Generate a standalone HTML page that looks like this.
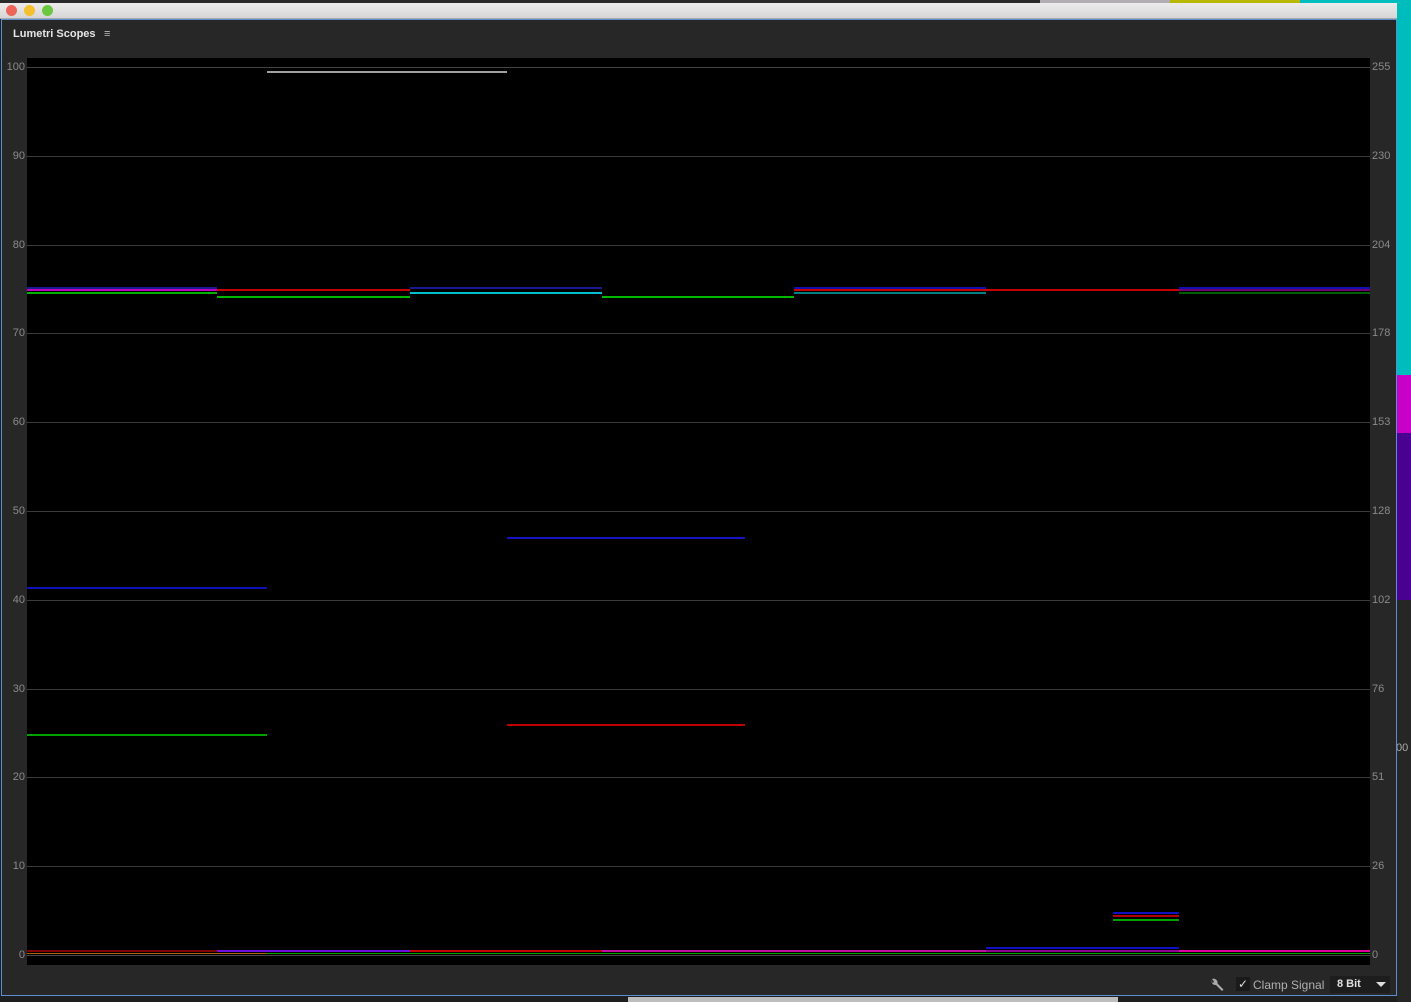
<!DOCTYPE html>
<html><head><meta charset="utf-8">
<style>
*{margin:0;padding:0;box-sizing:border-box}
body{width:1411px;height:1002px;overflow:hidden;background:#1e1e1e;position:relative;font-family:"Liberation Sans",sans-serif}
.a{position:absolute}
.l{position:absolute;height:2px}
.g{position:absolute;left:27px;width:1343px;height:1px;background:#3a3a3a}
.yl{position:absolute;left:0;width:25px;text-align:right;color:#8a8a8a;font-size:11px}
.yr{position:absolute;left:1372px;color:#8a8a8a;font-size:11px}
</style></head><body>
<div class="a" style="left:1397px;top:0;width:14px;height:375px;background:#00bdbd"></div>
<div class="a" style="left:1397px;top:375px;width:14px;height:58px;background:#c800c8"></div>
<div class="a" style="left:1397px;top:433px;width:14px;height:167px;background:#4a0090"></div>
<div class="a" style="left:1397px;top:600px;width:14px;height:402px;background:#262626"></div>
<div class="a" style="left:1396px;top:742px;color:#aaa;font-size:11px">00</div>
<div class="a" style="left:0;top:0;width:1397px;height:3px;background:#2a2a2a"></div>
<div class="a" style="left:1040px;top:0;width:130px;height:3px;background:#b0aeb0"></div>
<div class="a" style="left:1170px;top:0;width:130px;height:3px;background:#b8b800"></div>
<div class="a" style="left:1300px;top:0;width:97px;height:3px;background:#00bdbd"></div>
<div class="a" style="left:0;top:3px;width:1397px;height:16px;background:linear-gradient(#ececec,#d6d6d6);border-bottom:1px solid #aaa"></div>
<div class="a" style="left:6px;top:5px;width:11px;height:11px;border-radius:50%;background:#ec6559"></div>
<div class="a" style="left:24px;top:5px;width:11px;height:11px;border-radius:50%;background:#f4c02f"></div>
<div class="a" style="left:42px;top:5px;width:11px;height:11px;border-radius:50%;background:#6ac840"></div>
<div class="a" style="left:1px;top:19px;width:1396px;height:977px;background:#272727;border:1px solid #5b8fcf"></div>
<div class="a" style="left:13px;top:28px;color:#e6e6e6;font-size:11px;font-weight:bold">Lumetri Scopes</div>
<div class="a" style="left:104px;top:28px;color:#bbb;font-size:11px">≡</div>
<div class="a" style="left:27px;top:58px;width:1343px;height:907px;background:#000"></div>
<div class="g" style="top:67px;background:#444"></div>
<div class="g" style="top:156px"></div><div class="g" style="top:245px"></div><div class="g" style="top:333px"></div>
<div class="g" style="top:422px"></div><div class="g" style="top:511px"></div><div class="g" style="top:600px"></div>
<div class="g" style="top:689px"></div><div class="g" style="top:777px"></div><div class="g" style="top:866px"></div>
<div class="g" style="top:955px;background:#444"></div>
<div class="yl" style="top:61px">100</div><div class="yl" style="top:150px">90</div><div class="yl" style="top:239px">80</div>
<div class="yl" style="top:327px">70</div><div class="yl" style="top:416px">60</div><div class="yl" style="top:505px">50</div>
<div class="yl" style="top:594px">40</div><div class="yl" style="top:683px">30</div><div class="yl" style="top:771px">20</div>
<div class="yl" style="top:860px">10</div><div class="yl" style="top:949px">0</div>
<div class="yr" style="top:61px">255</div><div class="yr" style="top:150px">230</div><div class="yr" style="top:239px">204</div>
<div class="yr" style="top:327px">178</div><div class="yr" style="top:416px">153</div><div class="yr" style="top:505px">128</div>
<div class="yr" style="top:594px">102</div><div class="yr" style="top:683px">76</div><div class="yr" style="top:771px">51</div>
<div class="yr" style="top:860px">26</div><div class="yr" style="top:949px">0</div>
<div class="l" style="left:267px;top:71px;width:240px;background:#a0a0a0"></div>
<div class="l" style="left:27px;top:287px;width:190px;background:#1a1a90"></div>
<div class="l" style="left:27px;top:289px;width:190px;background:#c000c0"></div>
<div class="l" style="left:27px;top:292px;width:190px;background:#00b000"></div>
<div class="l" style="left:217px;top:289px;width:193px;background:#c80000"></div>
<div class="l" style="left:217px;top:296px;width:193px;background:#00b800"></div>
<div class="l" style="left:410px;top:287px;width:192px;background:#1a1a90"></div>
<div class="l" style="left:410px;top:292px;width:192px;background:#00c0d0"></div>
<div class="l" style="left:602px;top:296px;width:192px;background:#00b800"></div>
<div class="l" style="left:794px;top:287px;width:192px;background:#1010b0"></div>
<div class="l" style="left:794px;top:289px;width:192px;background:#c80000"></div>
<div class="l" style="left:794px;top:292px;width:192px;background:#008080"></div>
<div class="l" style="left:986px;top:289px;width:193px;background:#c80000"></div>
<div class="l" style="left:1179px;top:287px;width:191px;background:#1010b0"></div>
<div class="l" style="left:1179px;top:289px;width:191px;background:#700070"></div>
<div class="l" style="left:1179px;top:292px;width:191px;background:#006000"></div>
<div class="l" style="left:27px;top:587px;width:240px;background:#1010b8"></div>
<div class="l" style="left:27px;top:734px;width:240px;background:#00a000"></div>
<div class="l" style="left:507px;top:537px;width:238px;background:#1414c0"></div>
<div class="l" style="left:507px;top:724px;width:238px;background:#c00000"></div>
<div class="l" style="left:1113px;top:912px;width:66px;background:#1010c0"></div>
<div class="l" style="left:1113px;top:915px;width:66px;background:#b00000"></div>
<div class="l" style="left:1113px;top:919px;width:66px;background:#00a000"></div>
<div class="l" style="left:27px;top:950px;width:190px;background:#800000"></div>
<div class="l" style="left:217px;top:950px;width:193px;background:#7010e0"></div>
<div class="l" style="left:410px;top:950px;width:192px;background:#c80000"></div>
<div class="l" style="left:602px;top:950px;width:384px;background:#c010a0"></div>
<div class="l" style="left:986px;top:950px;width:193px;background:#900090"></div>
<div class="l" style="left:986px;top:947px;width:193px;background:#1010c0"></div>
<div class="l" style="left:1179px;top:950px;width:191px;background:#e000a0"></div>
<div class="l" style="left:27px;top:953px;width:240px;height:1px;background:#b06000"></div>
<div class="l" style="left:267px;top:953px;width:1103px;height:1px;background:#00a000"></div>
<svg class="a" style="left:1209px;top:977px" width="16" height="16" viewBox="0 0 16 16"><path d="M3 2 a4 4 0 0 0 4 6 L13 14 L14.5 12.5 L8.5 6.5 A4 4 0 0 0 3 2 L5 4.5 L4 6 L1.8 4.5 Z" fill="#aaa"/></svg>
<div class="a" style="left:1236px;top:977px;width:14px;height:14px;background:#1a1a1a;color:#ddd;font-size:12px;line-height:14px;text-align:center">✓</div>
<div class="a" style="left:1253px;top:978px;color:#b0b0b0;font-size:12px">Clamp Signal</div>
<div class="a" style="left:1330px;top:976px;width:60px;height:17px;background:#1d1d1d"></div>
<div class="a" style="left:1337px;top:978px;color:#e0e0e0;font-size:11px;font-weight:bold">8 Bit</div>
<div class="a" style="left:1376px;top:982px;width:0;height:0;border-left:5px solid transparent;border-right:5px solid transparent;border-top:5px solid #ddd"></div>
<div class="a" style="left:628px;top:997px;width:490px;height:5px;background:#bdbdbd"></div>
</body></html>
